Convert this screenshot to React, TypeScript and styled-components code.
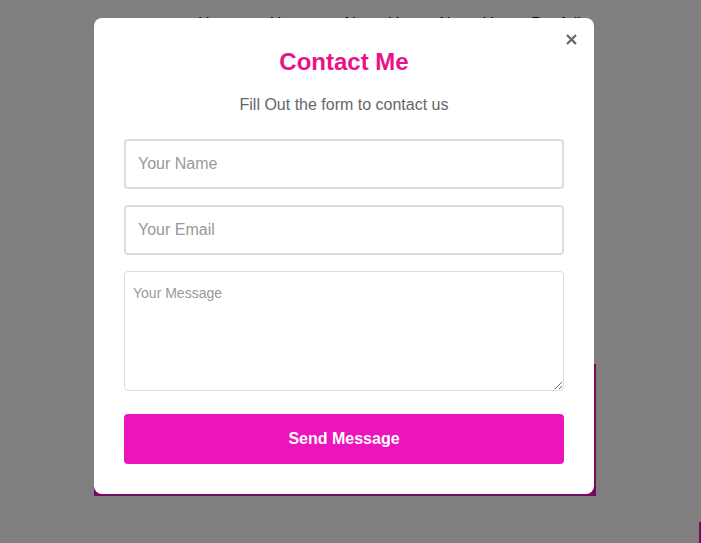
import React from "react";
import styled, { createGlobalStyle } from "styled-components";

const GlobalStyle = createGlobalStyle`
  html, body {
    margin: 0;
    padding: 0;
    background: #ffffff;
    font-family: "Liberation Sans", Arial, sans-serif;
  }
  * {
    box-sizing: border-box;
  }
`;

const navLinks = ["Home", "Home", "About Us", "About Us", "Portfolio"];

export default function App() {
  return (
    <>
      <GlobalStyle />
      <Page>
        <Nav>
          {navLinks.map((label, i) => (
            <NavLink key={i}>{label}</NavLink>
          ))}
        </Nav>
        <Hero />
        <FooterRow>
          <Corner />
        </FooterRow>
      </Page>

      <Overlay>
        <Modal>
          <CloseButton aria-label="Close">
            <svg width="11" height="11" viewBox="0 0 11 11">
              <path
                d="M1 1 L10 10 M10 1 L1 10"
                stroke="#666"
                strokeWidth="2.2"
                strokeLinecap="butt"
              />
            </svg>
          </CloseButton>
          <Title>Contact Me</Title>
          <Subtitle>Fill Out the form to contact us</Subtitle>
          <Form onSubmit={(e) => e.preventDefault()}>
            <Input type="text" placeholder="Your Name" />
            <Input type="email" placeholder="Your Email" />
            <Message placeholder="Your Message" />
            <SendButton type="submit">Send Message</SendButton>
          </Form>
        </Modal>
      </Overlay>
    </>
  );
}

const Page = styled.div`
  min-height: 543px;
  display: flex;
  flex-direction: column;
`;

const Nav = styled.nav`
  display: flex;
  gap: 29px;
  padding: 15px 0 0 198px;
`;

const NavLink = styled.a`
  font-size: 16px;
  color: #000;
  text-decoration: none;
`;

const Hero = styled.section`
  margin: 331px 0 0 94px;
  width: 502px;
  height: 132px;
  background: #ec14bc;
`;

const FooterRow = styled.div`
  display: flex;
  justify-content: flex-end;
  margin-top: 26px;
`;

const Corner = styled.div`
  width: 2px;
  height: 22px;
  background: #ec14bc;
`;

const Overlay = styled.div`
  position: fixed;
  inset: 0;
  background: rgba(0, 0, 0, 0.5);
  display: flex;
  align-items: flex-start;
  padding: 18px 0 0 94px;
`;

const Modal = styled.div`
  position: relative;
  width: 500px;
  height: 476px;
  background: #ffffff;
  border-radius: 8px;
  padding: 30px;
  text-align: center;
`;

const CloseButton = styled.button`
  position: absolute;
  top: 15px;
  right: 16px;
  width: 13px;
  height: 13px;
  padding: 1px;
  border: none;
  background: none;
  cursor: pointer;
  display: flex;
  align-items: center;
  justify-content: center;
`;

const Title = styled.h2`
  margin: 0;
  font-size: 24px;
  line-height: 28px;
  font-weight: 700;
  color: #e91388;
`;

const Subtitle = styled.p`
  margin: 20px 0 25px;
  font-size: 16px;
  line-height: 18px;
  color: #666666;
`;

const Form = styled.form`
  display: flex;
  flex-direction: column;
  gap: 16px;
`;

const Input = styled.input`
  display: block;
  width: 100%;
  height: 50px;
  padding: 0 12px;
  border: 2px solid #dddddd;
  border-radius: 4px;
  font-family: "Liberation Sans", Arial, sans-serif;
  font-size: 16px;
  color: #333;
  outline: none;

  &::placeholder {
    color: #999999;
  }
`;

const Message = styled.textarea`
  display: block;
  width: 100%;
  height: 120px;
  padding: 11px 8px 10px;
  border: 1px solid #dddddd;
  border-radius: 4px;
  font-family: "Liberation Sans", Arial, sans-serif;
  font-size: 14px;
  line-height: 21px;
  color: #333;
  outline: none;

  &::placeholder {
    color: #999999;
  }
`;

const SendButton = styled.button`
  margin-top: 7px;
  height: 50px;
  width: 100%;
  border: none;
  border-radius: 4px;
  background: #ec14bc;
  color: #ffffff;
  font-family: "Liberation Sans", Arial, sans-serif;
  font-size: 16px;
  font-weight: 700;
  cursor: pointer;
`;
